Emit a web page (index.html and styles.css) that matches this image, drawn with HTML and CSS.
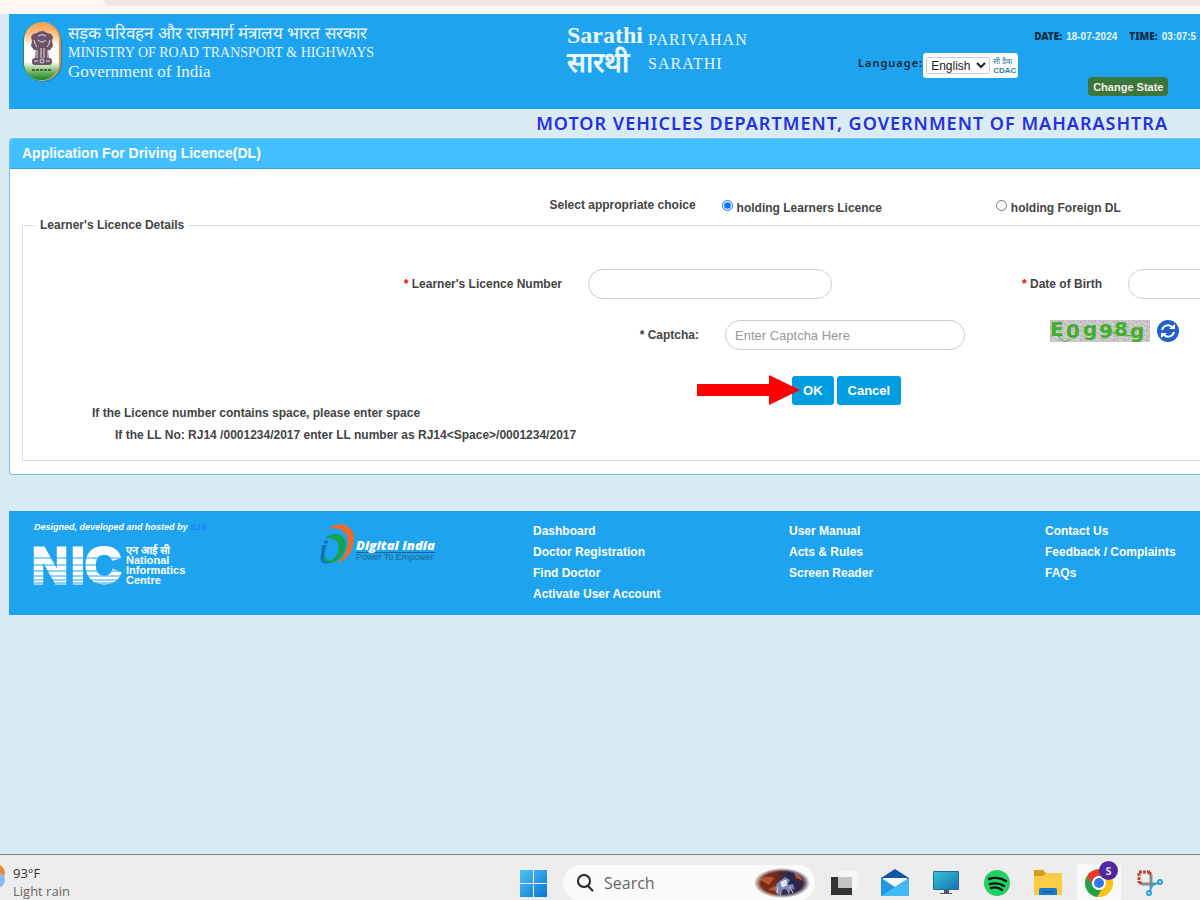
FILE: index.html
```html
<!DOCTYPE html>
<html lang="en">
<head>
  <meta charset="UTF-8" />
  <meta name="viewport" content="width=device-width, initial-scale=1.0"/>
  <title>Application For Driving Licence(DL)</title>
  <link rel="stylesheet" href="styles.css">
</head>
<body>

<!-- Browser bar -->
<div class="browser-bar"><div class="address"></div></div>

<div class="page">

  <!-- Header -->
  <header class="header">
    <div class="ministry">
      <svg class="emblem" viewBox="0 0 40 60" width="40" height="60">
        <defs>
          <linearGradient id="flag" x1="0" y1="0" x2="0" y2="1">
            <stop offset="0" stop-color="#f6a14c"/><stop offset=".2" stop-color="#fbc28c"/>
            <stop offset=".4" stop-color="#ffffff"/><stop offset=".68" stop-color="#ffffff"/>
            <stop offset=".84" stop-color="#7cbf6d"/><stop offset="1" stop-color="#14872b"/>
          </linearGradient>
          <linearGradient id="rim" x1="0" y1="0" x2="1" y2="0">
            <stop offset="0" stop-color="#1f8f3d"/><stop offset=".5" stop-color="#e9b06c"/><stop offset="1" stop-color="#f08a30"/>
          </linearGradient>
        </defs>
        <rect x="2" y="1" width="38" height="59" rx="19" fill="#166a9c" opacity=".5"/>
        <rect x="1" y="0" width="38" height="59" rx="19" fill="url(#rim)"/>
        <rect x="2" y="1" width="35" height="57" rx="17" fill="url(#flag)"/>
        <g fill="#6b5267">
          <path d="M15 11q5-4 10 0l4 1 2 3-1 4 1 5-3 4H12l-3-4 1-5-1-4 2-3z"/>
          <path d="M14 27h12l1 9H13z"/>
          <rect x="10" y="36" width="20" height="7" rx="3"/>
        </g>
        <g fill="none" stroke="#e9dfe4" stroke-width="1">
          <path d="M16 14q4-3 8 0M16 18q4 4 8 0M12 18q1 5 3 7M28 18q-1 5-3 7M15 28v8M19 26v10M22 26v10M26 28v8"/>
          <circle cx="20" cy="39" r="2"/><path d="M12 39h4M24 39h4"/>
        </g>
        <path d="M10 48h20" stroke="#5a5a48" stroke-width="2" stroke-dasharray="3 1"/>
      </svg>
      <div class="ministry-text">
        <div class="hindi" lang="hi">सड़क परिवहन और राजमार्ग मंत्रालय भारत सरकार</div>
        <div>MINISTRY OF ROAD TRANSPORT &amp; HIGHWAYS</div>
        <div class="goi">Government of India</div>
      </div>
    </div>

    <div class="sarathi">
      <div class="sarathi-logo">
        <span>Sarathi</span>
        <span class="sarathi-hi" lang="hi">सारथी</span>
      </div>
      <div class="sarathi-name">PARIVAHAN<br>SARATHI</div>
    </div>

    <div class="tools">
      <div class="language">
        <label for="language">Language:</label>
        <div class="language-box">
          <select id="language">
            <option>English</option>
          </select>
          <div class="cdac"><span lang="hi">सी डैक</span><b>CDAC</b></div>
        </div>
      </div>
      <div class="status">
        <div class="clock">
          <b>DATE:</b>
          <span>18-07-2024</span>
          <b class="time">TIME:</b>
          <span>03:07:5</span>
        </div>
        <button class="change-state" type="button">Change State</button>
      </div>
    </div>
  </header>

  <h1 class="department">MOTOR VEHICLES DEPARTMENT, GOVERNMENT OF MAHARASHTRA</h1>

  <!-- Application form -->
  <main class="panel">
    <h2>Application For Driving Licence(DL)</h2>
    <form>
      <div class="choices">
        <span class="choice-title">Select appropriate choice</span>
        <div class="choice">
          <input type="radio" name="holding" id="learners" checked>
          <label for="learners">holding Learners Licence</label>
        </div>
        <div class="choice">
          <input type="radio" name="holding" id="foreign">
          <label for="foreign">holding Foreign DL</label>
        </div>
      </div>

      <fieldset>
        <legend>Learner's Licence Details</legend>

        <div class="row licence-row">
          <label for="licence"><span class="star">*</span> Learner's Licence Number</label>
          <input type="text" id="licence">
          <label for="dob"><span class="star">*</span> Date of Birth</label>
          <input type="text" id="dob" class="dob">
        </div>

        <div class="row captcha-row">
          <label for="captcha">* Captcha:</label>
          <input type="text" id="captcha" placeholder="Enter Captcha Here">
          <div class="captcha">
            <svg class="captcha-image" viewBox="0 0 100 22" width="100" height="22" role="img" aria-label="E0g98g">
              <defs>
                <pattern id="noise" width="11" height="9" patternUnits="userSpaceOnUse">
                  <rect width="11" height="9" fill="#c9c7c9"/>
                  <path d="M1 1h1M5 0h1M8 2h2M3 4h1M6 6h1M0 7h2M9 7h1" stroke="#a09ba0"/>
                  <path d="M3 2h2M7 4h2M2 6h1M5 8h2" stroke="#dddbdd"/>
                </pattern>
              </defs>
              <rect width="100" height="22" fill="url(#noise)"/>
              <g class="captcha-code">
                <text x="0" y="16">E</text><text x="16" y="18">0</text><text x="33" y="16">g</text>
                <text x="49" y="18">9</text><text x="64" y="16">8</text><text x="80" y="18">g</text>
              </g>
              <path d="M8 16q7 9 11 3M58 12l24 4" fill="none" stroke="#3fae28"/>
            </svg>
            <button class="refresh" type="button" aria-label="Refresh captcha">
              <svg viewBox="0 0 22 22" width="22" height="22">
                <circle cx="11" cy="11" r="11" fill="#2262c6"/>
                <path d="M5 10a6 6 0 0 1 10-3M17 12a6 6 0 0 1-10 3" fill="none" stroke="#fff" stroke-width="2"/>
                <path d="M12 9h6V4zM10 13H4v5z" fill="#fff"/>
              </svg>
            </button>
          </div>
        </div>

        <div class="actions">
          <div class="buttons">
            <button type="button">OK</button>
            <button type="button">Cancel</button>
            <svg class="arrow" viewBox="0 0 103 30" width="103" height="30">
              <path d="M0 9h72V0l31 15-31 15v-9H0z" fill="#fe0000"/>
            </svg>
          </div>
        </div>

        <div class="notes">
          <p>If the Licence number contains space, please enter space</p>
          <p class="example">If the LL No: RJ14 /0001234/2017 enter LL number as RJ14&lt;Space&gt;/0001234/2017</p>
        </div>
      </fieldset>
    </form>
  </main>

  <!-- Footer -->
  <footer class="footer">
    <div>
      <p class="hosted">Designed, developed and hosted by <a href="#">S16</a></p>
      <div class="nic">
        <svg class="nic-logo" viewBox="0 0 88 40" width="88" height="40">
          <g class="nic-letters">
            <text x="-2" y="38">N</text><text x="37" y="38">I</text><text x="51" y="38">C</text>
          </g>
          <path d="M0 13h88M0 20h88M0 26h88M0 31h88M0 35h88M0 38h88" stroke="#1ea4ef" stroke-width="1"/>
        </svg>
        <div class="nic-name"><span lang="hi">एन आई सी</span><br>National<br>Informatics<br>Centre</div>
      </div>
    </div>
    <div class="digital">
      <svg viewBox="0 0 36 42" width="36" height="42">
        <path d="M8 6C18-3 34 1 34 15c0 13-8 23-17 25 7-6 11-14 11-21C28 9 20 3 8 6z" fill="#ee6a2c"/>
        <path d="M5 15c8-7 21-5 21 6 0 9-7 17-14 19-7 1-10-3-8-9l2 3c1 5 5 4 8 1 7-7 8-21-9-20z" fill="#14a356"/>
        <path d="M2 22h5L4 33c-1 5 2 7 7 6-8 4-12 0-10-7z" fill="#1372b8"/>
        <circle cx="6" cy="19" r="2" fill="#1372b8"/>
      </svg>
      <div class="digital-name">
        <b>Digital India</b>
        <span>Power To Empower</span>
      </div>
    </div>
    <nav>
      <a href="#">Dashboard</a>
      <a href="#">Doctor Registration</a>
      <a href="#">Find Doctor</a>
      <a href="#">Activate User Account</a>
    </nav>
    <nav>
      <a href="#">User Manual</a>
      <a href="#">Acts &amp; Rules</a>
      <a href="#">Screen Reader</a>
    </nav>
    <nav>
      <a href="#">Contact Us</a>
      <a href="#">Feedback / Complaints</a>
      <a href="#">FAQs</a>
    </nav>
  </footer>
</div>

<!-- Taskbar -->
<div class="taskbar">
  <div class="weather">
    <svg viewBox="0 0 5 24" width="5" height="24">
      <circle cx="-4" cy="9" r="9" fill="#f0862a"/>
      <circle cx="-3" cy="16" r="8" fill="#8fb8f2"/>
    </svg>
    <div>93°F<br><span>Light rain</span></div>
  </div>
  <div class="apps">
    <button type="button" aria-label="Start">
      <svg viewBox="0 0 28 28" width="28" height="28">
        <defs>
          <linearGradient id="win" x1="0" y1="0" x2="1" y2="1"><stop offset="0" stop-color="#4cc4f5"/><stop offset="1" stop-color="#0b74d4"/></linearGradient>
        </defs>
        <path d="M1 1h13v13H1zM15 1h13v13H15zM1 15h13v13H1zM15 15h13v13H15z" fill="url(#win)"/>
      </svg>
    </button>
    <div class="search">
      <svg viewBox="0 0 18 18" width="18" height="18">
        <circle cx="8" cy="7" r="6" fill="none" stroke="#222" stroke-width="2"/>
        <path d="M12 12l5 5" stroke="#222" stroke-width="2"/>
      </svg>
      <input type="text" placeholder="Search" aria-label="Search">
      <svg viewBox="0 0 56 30" width="56" height="30">
        <defs>
          <radialGradient id="fade"><stop offset=".75" stop-color="#fff"/><stop offset="1" stop-color="#fff" stop-opacity="0"/></radialGradient>
          <linearGradient id="nebula"><stop offset="0" stop-color="#6d2d1c"/><stop offset=".35" stop-color="#7a2c18"/><stop offset=".6" stop-color="#26284f"/><stop offset="1" stop-color="#43213c"/></linearGradient>
          <mask id="oval"><ellipse cx="28" cy="15" rx="28" ry="15" fill="url(#fade)"/></mask>
        </defs>
        <g mask="url(#oval)">
          <rect width="56" height="30" fill="url(#nebula)"/>
          <path d="M5 12q8-6 15-2l-5 7q-6-4-10-5M40 4q6 3 9 9l-7-3zM13 22l8-4 2 5z" fill="#b8532b"/>
          <path d="M22 25q-3-8 4-12l5-4 5 3-3 5 6-1 2 6-4-2-2 7-3-6-4 1-1 6z" fill="#7e89b8"/>
          <path d="M27 14l5-2 1 5-5 2zM36 19l3 6M24 19l-1 6" fill="#dfe2ee" stroke="#dfe2ee"/>
        </g>
      </svg>
    </div>
    <button type="button" aria-label="Task view">
      <svg viewBox="0 0 28 28" width="28" height="28">
        <path d="M8 2h20v19H8z" fill="#f6f6f6"/><path d="M1 8h21v18H1z" fill="#333"/><path d="M8 8h14v11H8z" fill="#c3c3c3"/>
      </svg>
    </button>
    <button type="button" aria-label="Mail">
      <svg viewBox="0 0 28 28" width="28" height="28">
        <path d="M0 9l14-9 14 9v8H0z" fill="#0f55a6"/><path d="M2 9h24v10H2z" fill="#f4f8fb"/>
        <path d="M0 9l14 9 14-9v18H0z" fill="#2196e3"/><path d="M0 27l28-18v18z" fill="#43b8f1"/>
      </svg>
    </button>
    <button type="button" aria-label="This PC">
      <svg viewBox="0 0 28 28" width="28" height="28">
        <defs><linearGradient id="screen" x1="0" y1="0" x2="1" y2="1"><stop offset="0" stop-color="#37c3d2"/><stop offset="1" stop-color="#1672b8"/></linearGradient></defs>
        <path d="M12 20h5v4h3v1H8v-1h4z" fill="#4b5963"/>
        <rect x="1" y="2" width="26" height="19" rx="1" fill="#24699a"/><rect x="2" y="3" width="24" height="17" fill="url(#screen)"/>
      </svg>
    </button>
    <button type="button" aria-label="Spotify">
      <svg viewBox="0 0 28 28" width="28" height="28">
        <circle cx="14" cy="14" r="13" fill="#1ed25f"/>
        <path d="M6 10q9-3 17 2M7 15q8-2 14 2M8 19q6-2 11 2" fill="none" stroke="#111" stroke-width="2.4" stroke-linecap="round"/>
      </svg>
    </button>
    <button type="button" aria-label="File Explorer">
      <svg viewBox="0 0 28 28" width="28" height="28">
        <path d="M0 1h9l3 3h15v5H0z" fill="#d99a1c"/><path d="M0 7h9l3-3h16v22H0z" fill="#fbcc45"/>
        <path d="M5 26v-5q0-2 2-2h14q2 0 2 2v5z" fill="#1a77c8"/><path d="M9 23h10" stroke="#0f568f"/>
      </svg>
    </button>
    <button type="button" class="active" aria-label="Chrome">
      <svg viewBox="0 0 28 28" width="28" height="28">
        <circle cx="14" cy="14" r="14" fill="#fbc116"/>
        <path d="M2 7a14 14 0 0 1 24 0H14a7 7 0 0 0-6 10z" fill="#e33b2e"/>
        <path d="M2 7l6 10a7 7 0 0 0 9 3l-5 8A14 14 0 0 1 2 7z" fill="#27a04b"/>
        <circle cx="14" cy="14" r="7" fill="#fff"/><circle cx="14" cy="14" r="5" fill="#3177ea"/>
      </svg>
      <span class="badge">S</span>
    </button>
    <button type="button" aria-label="Snipping Tool">
      <svg viewBox="0 0 28 28" width="28" height="28">
        <path d="M14 3H3v11" fill="none" stroke="#c8452f" stroke-width="3" stroke-dasharray="3 1"/>
        <path d="M3 14h3M14 3v3" stroke="#c8452f" stroke-width="3"/>
        <path d="M15 6v13M6 15h13" stroke="#85898d" stroke-width="3"/>
        <g fill="none" stroke="#2b9fdc" stroke-width="2"><circle cx="13" cy="24" r="2"/><circle cx="24" cy="13" r="2"/></g>
        <path d="M16 16l-2 6M16 16l6-2" stroke="#2b9fdc" stroke-width="2"/>
      </svg>
    </button>
  </div>
</div>

</body>
</html>
```

FILE: styles.css
```css
* {
  box-sizing: border-box;
}
body {
  margin: 0;
  min-height: 100vh;
  display: flex;
  flex-direction: column;
  overflow: hidden;
  background: #d9ecf5;
  font-family: "Liberation Sans", Arial, sans-serif;
  font-size: 12px;
  color: #444;
}
h1, h2, p {
  margin: 0;
}
a {
  color: inherit;
  text-decoration: none;
}
svg {
  display: block;
  flex: none;
}
button {
  font-family: inherit;
  cursor: pointer;
}

/* Browser bar */
.browser-bar {
  height: 14px;
  background: #fdf6f1;
}
.address {
  height: 6px;
  margin-left: 104px;
  background: #f1e6e5;
  border-bottom-left-radius: 12px;
}

.page {
  flex: 1;
  padding-left: 9px;
}

/* Header */
.header {
  display: grid;
  grid-template-columns: 558fr 291fr 342fr;
  min-height: 95px;
  background: #1ea4ef;
  color: #e9f7ff;
  white-space: nowrap;
}
.ministry {
  display: flex;
  gap: 6px;
  padding: 8px 0 0 13px;
}
.ministry-text {
  padding-top: 2px;
  font-family: "Liberation Serif", "Times New Roman", serif;
  font-size: 14px;
  line-height: 19px;
}
.hindi,
.goi {
  font-size: 17px;
}
.sarathi {
  display: flex;
  gap: 6px;
  padding-top: 8px;
  font-family: "Liberation Serif", "Times New Roman", serif;
}
.sarathi-logo {
  display: flex;
  flex-direction: column;
  width: 75px;
  font-size: 24px;
  font-weight: bold;
  line-height: 27px;
}
.sarathi-hi {
  font-size: 28px;
  line-height: 28px;
}
.sarathi-name {
  padding-top: 6px;
  font-size: 16px;
  line-height: 24px;
  letter-spacing: 1px;
}
.tools {
  display: flex;
  gap: 16px;
}
.language {
  display: flex;
  align-items: flex-start;
  padding-top: 39px;
}
.language label {
  padding-top: 2px;
  color: #12283a;
  font-family: "Noto Sans", Verdana, sans-serif;
  font-size: 11px;
  font-weight: 600;
  letter-spacing: 1px;
}
.language-box {
  display: flex;
  align-items: center;
  gap: 3px;
  height: 25px;
  padding: 0 3px;
  background: #fff;
  border-radius: 3px;
}
.language-box select {
  width: 64px;
  height: 17px;
  padding: 0;
  border: 1px solid #ccc;
  border-radius: 2px;
  background: #fff;
  color: #222;
  font-family: inherit;
  font-size: 12px;
}
.cdac {
  width: 22px;
  color: #2d7f9f;
  font-size: 8px;
  line-height: 9px;
}
.cdac span, .cdac b {
  display: block;
}
.status {
  padding-top: 15px;
  font-size: 10px;
  font-weight: bold;
}
.clock {
  display: flex;
  align-items: center;
  gap: 4px;
  height: 14px;
}
.clock b {
  color: #0b2b44;
  font-family: "Noto Sans", Verdana, sans-serif;
}
.clock .time {
  margin-left: 8px;
}
.change-state {
  display: block;
  height: 19px;
  margin: 34px 0 0 54px;
  padding: 0 5px;
  border: 0;
  border-radius: 4px;
  background: #3c763d;
  color: #f2f2e8;
  font-size: 11px;
  font-weight: bold;
}
.department {
  padding-right: 32px;
  color: #2530e0;
  font-family: "Trebuchet MS", "Noto Sans", sans-serif;
  font-size: 18px;
  font-weight: 600;
  line-height: 29px;
  letter-spacing: 1px;
  text-align: right;
}

/* Form panel */
.panel {
  background: #fff;
  border: 1px solid #6fc4de;
  border-right: 0;
  border-radius: 4px 0 0 4px;
  font-weight: bold;
  overflow: hidden;
}
.panel h2 {
  padding-left: 12px;
  background: #42bfff;
  border-bottom: 1px solid #36a3dc;
  color: #fff;
  font-size: 14px;
  line-height: 29px;
}
form {
  padding: 29px 0 13px 12px;
}
.choices {
  display: grid;
  grid-template-columns: 673fr 248fr 204fr;
  column-gap: 26px;
  height: 20px;
}
.choice-title {
  text-align: right;
}
.choice {
  display: flex;
  gap: 4px;
}
.choice input {
  width: 11px;
  height: 11px;
  margin: 2px 0 0;
}
.choice label {
  padding-top: 3px;
}
fieldset {
  min-width: 0;
  margin: 0;
  padding: 37px 0 17px;
  border: 1px solid #ddd;
  border-right: 0;
}
legend {
  margin-left: 12px;
  padding: 0 5px;
}
.row {
  display: grid;
  align-items: center;
  column-gap: 26px;
}
.row label {
  text-align: right;
}
.licence-row {
  grid-template-columns: 539fr 244fr 244fr minmax(0, 72fr);
}
.captcha-row {
  grid-template-columns: 676fr 240fr 209fr;
  margin-top: 21px;
}
.star {
  color: #f00;
}
.row input {
  width: 100%;
  height: 30px;
  padding: 0 9px;
  border: 1px solid #ccc;
  border-radius: 15px;
  font-family: inherit;
  font-size: 13px;
}
.row .dob {
  min-width: 244px;
}
.row input::placeholder {
  color: #999;
}
.captcha {
  display: flex;
  gap: 7px;
  padding: 0 0 8px 59px;
}
.captcha-image {
  overflow: visible;
}
.captcha-code {
  fill: #3fae28;
  font-family: "DejaVu Sans", Verdana, sans-serif;
  font-size: 20px;
  font-weight: bold;
}
.refresh {
  padding: 0;
  border: 0;
  background: none;
}
.actions {
  margin-top: 26px;
  padding-left: 65%;
}
.buttons {
  position: relative;
  display: flex;
  gap: 3px;
  padding-left: 4px;
}
.buttons button {
  height: 29px;
  padding: 0 11px;
  border: 0;
  border-radius: 3px;
  background: #019de1;
  color: #fff;
  font-size: 13px;
  font-weight: bold;
}
.arrow {
  position: absolute;
  top: -1px;
  left: -91px;
}
.notes {
  display: flex;
  flex-direction: column;
  gap: 6px;
  padding-left: 69px;
  line-height: 16px;
}
.example {
  padding-left: 23px;
}

/* Footer */
.footer {
  display: grid;
  grid-template-columns: 286fr 213fr 256fr 256fr 155fr;
  min-height: 104px;
  margin-top: 36px;
  padding: 10px 0 0 25px;
  background: #1ea4ef;
  color: #fff;
  white-space: nowrap;
}
.hosted {
  font-size: 9px;
  font-style: italic;
  font-weight: bold;
  line-height: 12px;
}
.hosted a {
  color: #1383f5;
}
.nic {
  display: flex;
  gap: 4px;
  padding-top: 12px;
}
.nic-logo {
  overflow: visible;
}
.nic-letters {
  fill: #fff;
  stroke: #fff;
  stroke-width: 3px;
  font-family: "Liberation Sans", Arial, sans-serif;
  font-size: 50px;
  font-weight: bold;
}
.nic-name {
  font-size: 11px;
  font-weight: bold;
  line-height: 10px;
}
.digital {
  display: flex;
  align-items: flex-start;
  padding-top: 2px;
}
.digital-name {
  padding-top: 15px;
}
.digital-name b {
  display: block;
  border-bottom: 1px solid #17639c;
  font-family: "Open Sans", sans-serif;
  font-size: 13px;
  font-style: italic;
  font-weight: 800;
  line-height: 14px;
}
.digital-name span {
  display: block;
  color: #22678f;
  font-size: 9px;
  line-height: 8px;
}
.footer nav {
  display: flex;
  flex-direction: column;
  font-size: 12px;
  font-weight: bold;
  line-height: 21px;
}

/* Taskbar */
.taskbar {
  display: grid;
  grid-template-columns: 518fr 682fr;
  height: 46px;
  border-top: 1px solid #808488;
  background: #ededed;
  font-family: "Open Sans", "Segoe UI", sans-serif;
}
.weather {
  display: flex;
  gap: 8px;
  padding-top: 9px;
  color: #333;
  font-size: 13px;
  line-height: 18px;
}
.weather span {
  color: #666;
}
.apps {
  display: flex;
  align-items: center;
  gap: 7px;
  padding-top: 9px;
}
.apps button {
  position: relative;
  display: flex;
  align-items: center;
  justify-content: center;
  width: 44px;
  height: 38px;
  padding: 0;
  border: 0;
  border-radius: 4px;
  background: none;
}
.apps button:first-child {
  width: 30px;
}
.apps .active {
  background: #f8f8f8;
}
.search {
  display: flex;
  align-items: center;
  gap: 10px;
  width: 252px;
  height: 36px;
  margin-left: 8px;
  padding: 0 5px 0 13px;
  border-radius: 18px;
  background: #fafafa;
}
.search input {
  flex: 1;
  min-width: 0;
  padding: 0;
  border: 0;
  background: none;
  font-family: inherit;
  font-size: 16px;
}
.search input::placeholder {
  color: #666;
}
.badge {
  position: absolute;
  top: -3px;
  right: 3px;
  width: 19px;
  border-radius: 50%;
  background: #5128a0;
  color: #ddd;
  font-size: 11px;
  font-weight: bold;
  line-height: 19px;
  text-align: center;
}
```
